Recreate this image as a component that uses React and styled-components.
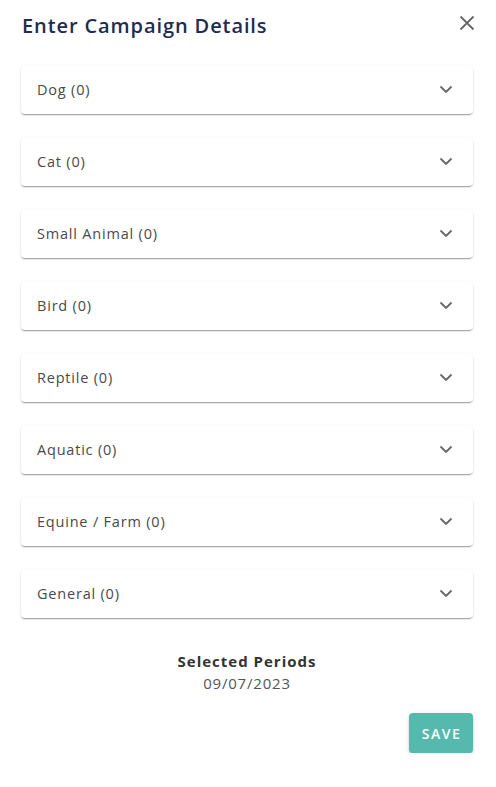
import React from "react";
import styled, { createGlobalStyle } from "styled-components";

const GlobalStyle = createGlobalStyle`
  body {
    margin: 0;
    background: #fff;
    font-family: "Open Sans", "Liberation Sans", sans-serif;
  }
`;

const Dialog = styled.div`
  width: 496px;
  box-sizing: border-box;
  padding: 0 23px 0 21px;
`;

const Header = styled.div`
  display: flex;
  align-items: center;
  justify-content: space-between;
  height: 50px;
  padding-left: 1px;
  margin-bottom: 16px;
`;

const Title = styled.h2`
  margin: 0;
  font-size: 20px;
  font-weight: 600;
  color: #1f2b52;
  letter-spacing: 0.9px;
`;

const CloseButton = styled.button`
  border: none;
  background: none;
  padding: 0;
  margin-right: -6px;
  margin-top: -4px;
  width: 24px;
  height: 24px;
  display: flex;
  align-items: center;
  justify-content: center;
  cursor: pointer;
`;

const List = styled.div`
  display: flex;
  flex-direction: column;
  gap: 24px;
`;

const Card = styled.div`
  height: 48px;
  box-sizing: border-box;
  display: flex;
  align-items: center;
  justify-content: space-between;
  padding: 0 20px 2px 16px;
  background: #fff;
  border-radius: 4px;
  box-shadow: 0 2px 1px -1px rgba(0, 0, 0, 0.2), 0 1px 1px 0 rgba(0, 0, 0, 0.14),
    0 1px 3px 0 rgba(0, 0, 0, 0.12);
`;

const Label = styled.span`
  font-size: 14.5px;
  color: #4a4a4a;
  letter-spacing: 0.8px;
`;

const Periods = styled.div`
  margin-top: 33px;
  text-align: center;
  color: #333;
`;

const PeriodsTitle = styled.div`
  font-size: 15px;
  font-weight: 700;
  line-height: 20px;
  letter-spacing: 1px;
`;

const PeriodsDate = styled.div`
  font-size: 15px;
  color: #555;
  line-height: 24px;
  letter-spacing: 0.8px;
`;

const Footer = styled.div`
  display: flex;
  justify-content: flex-end;
  margin-top: 18px;
`;

const SaveButton = styled.button`
  width: 64px;
  height: 40px;
  border: none;
  border-radius: 4px;
  background: #55b9ad;
  color: #fff;
  font-family: inherit;
  font-size: 14px;
  font-weight: 600;
  letter-spacing: 1.5px;
  padding: 0 0 0 1px;
  box-shadow: 0 3px 1px -2px rgba(0, 0, 0, 0.2), 0 2px 2px 0 rgba(0, 0, 0, 0.14),
    0 1px 5px 0 rgba(0, 0, 0, 0.12);
  cursor: pointer;
`;

const Chevron = () => (
  <svg width="14" height="14" viewBox="0 0 14 14">
    <path d="M1.5 4.5 L7 10 L12.5 4.5" fill="none" stroke="#666" strokeWidth="1.8" />
  </svg>
);

const categories = [
  "Dog",
  "Cat",
  "Small Animal",
  "Bird",
  "Reptile",
  "Aquatic",
  "Equine / Farm",
  "General",
];

export default function App() {
  return (
    <>
      <GlobalStyle />
      <Dialog>
        <Header>
          <Title>Enter Campaign Details</Title>
          <CloseButton aria-label="close">
            <svg width="16" height="16" viewBox="0 0 16 16">
              <path d="M1.5 1.5 L14.5 14.5 M14.5 1.5 L1.5 14.5" stroke="#666" strokeWidth="1.8" />
            </svg>
          </CloseButton>
        </Header>
        <List>
          {categories.map((c) => (
            <Card key={c}>
              <Label>{c} (0)</Label>
              <Chevron />
            </Card>
          ))}
        </List>
        <Periods>
          <PeriodsTitle>Selected Periods</PeriodsTitle>
          <PeriodsDate>09/07/2023</PeriodsDate>
        </Periods>
        <Footer>
          <SaveButton>SAVE</SaveButton>
        </Footer>
      </Dialog>
    </>
  );
}
